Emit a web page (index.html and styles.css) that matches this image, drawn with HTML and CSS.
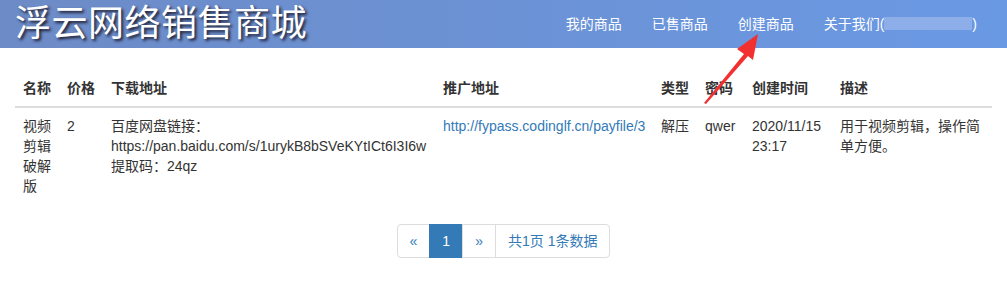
FILE: index.html
```html
<!DOCTYPE html>
<html lang="zh-CN">
<head>
  <meta charset="UTF-8" />
  <title>浮云网络销售商城</title>
  <link rel="stylesheet" href="styles.css">
</head>
<body>
  <header class="topbar">
    <div class="brand">浮云网络销售商城</div>
    <ul class="nav">
      <li><a href="#">我的商品</a></li>
      <li><a href="#">已售商品</a></li>
      <li><a href="#">创建商品</a></li>
      <li><a href="#">关于我们(<span class="masked"></span>)</a></li>
    </ul>
  </header>

  <div class="container">
    <table class="goods">
      <colgroup>
        <col class="c-name"><col class="c-price"><col class="c-down"><col class="c-promo">
        <col class="c-type"><col class="c-pass"><col class="c-time"><col class="c-desc">
      </colgroup>
      <thead>
        <tr>
          <th>名称</th>
          <th>价格</th>
          <th>下载地址</th>
          <th>推广地址</th>
          <th>类型</th>
          <th>密码</th>
          <th>创建时间</th>
          <th>描述</th>
        </tr>
      </thead>
      <tbody>
        <tr>
          <td>视频剪辑破解版</td>
          <td>2</td>
          <td>
            <div class="line">百度网盘链接：</div>
            <div class="line">https://pan.baidu.com/s/1urykB8bSVeKYtICt6I3I6w</div>
            <div class="line">提取码：24qz</div>
          </td>
          <td><a href="#" class="line">http://fypass.codinglf.cn/payfile/3</a></td>
          <td>解压</td>
          <td>qwer</td>
          <td>2020/11/15 23:17</td>
          <td>用于视频剪辑，操作简单方便。</td>
        </tr>
      </tbody>
    </table>

    <ul class="pager">
      <li><a href="#">&laquo;</a></li>
      <li class="active"><a href="#">1</a></li>
      <li><a href="#">&raquo;</a></li>
      <li><a href="#">共1页 1条数据</a></li>
    </ul>
  </div>

  <svg class="arrow" width="70" height="80" viewBox="0 0 70 80">
    <polygon points="2,72 42,23 35,18 56,3 51,29 46,25 4,73" fill="#f2302f" />
  </svg>
</body>
</html>
```

FILE: styles.css
```css
body {
  margin: 0;
  font-family: "Liberation Sans", "Noto Sans CJK SC", Arial, sans-serif;
  font-size: 14px;
  line-height: 20px;
  color: #333;
  background: #fff;
}

a {
  color: #337ab7;
  text-decoration: none;
}

.topbar {
  display: flex;
  align-items: center;
  height: 48px;
  padding: 0 15px;
  background: linear-gradient(to right, #6d8bc6, #6a99e4);
}

.brand {
  font-size: 36px;
  line-height: 48px;
  color: #fff;
  text-shadow: 2px 2px 3px #1b1b2e;
  letter-spacing: 0.5px;
}

.nav {
  display: flex;
  margin: 0 0 0 auto;
  padding: 0;
  list-style: none;
}

.nav a {
  display: block;
  padding: 0 15px;
  line-height: 44px;
  color: #fff;
}

.nav li:first-child a {
  padding-left: 17px;
}

.masked {
  display: inline-block;
  width: 88px;
  height: 13px;
  vertical-align: -1px;
  background: #8daee8;
}

.container {
  padding: 22px 15px 0;
}

.goods {
  width: 100%;
  table-layout: fixed;
  border-collapse: collapse;
  margin-bottom: 20px;
}

.c-name { width: 44px; }
.c-price { width: 44px; }
.c-down { width: 332px; }
.c-promo { width: 218px; }
.c-type { width: 44px; }
.c-pass { width: 47px; }
.c-time { width: 88px; }
.c-desc { width: auto; }

.goods th,
.goods td {
  padding: 8px;
  text-align: left;
  vertical-align: top;
}

.goods th {
  font-weight: bold;
  border-bottom: 2px solid #ddd;
}

.line {
  white-space: nowrap;
}

.pager {
  display: flex;
  justify-content: center;
  margin: 20px 0;
  padding: 0;
  list-style: none;
}

.pager a {
  display: block;
  padding: 6px 12px;
  margin-left: -1px;
  border: 1px solid #ddd;
  color: #337ab7;
}

.pager li:first-child a {
  margin-left: 0;
  border-radius: 4px 0 0 4px;
}

.pager li:last-child a {
  border-radius: 0 4px 4px 0;
}

.pager .active a {
  background: #337ab7;
  border-color: #337ab7;
  color: #fff;
}

.arrow {
  position: absolute;
  left: 702px;
  top: 31px;
}
```
